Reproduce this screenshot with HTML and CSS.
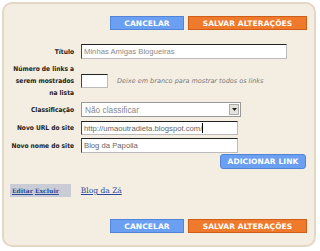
FILE: index.html
```html
<!DOCTYPE html>
<html>
<head>
<meta charset="utf-8">
<link rel="stylesheet" href="styles.css">
</head>
<body>
<div class="panel">
  <div class="actions top">
    <span class="btn blue">CANCELAR</span>
    <span class="btn orange">SALVAR ALTERAÇÕES</span>
  </div>
  <div class="form">
    <div class="lbl r-title">Título</div>
    <div class="field r-title"><span class="input wide">Minhas Amigas Blogueiras</span></div>

    <div class="lbl r-num">Número de links a<br>serem mostrados<br>na lista</div>
    <div class="field r-num"><span class="input small"></span><span class="hint">Deixe em branco para mostrar todos os links</span></div>

    <div class="lbl r-cls">Classificação</div>
    <div class="field r-cls"><span class="select">Não classificar<span class="arrow"><svg width="5" height="3" viewBox="0 0 5 3"><path d="M0 0h5L2.5 3z" fill="#222"/></svg></span></span></div>

    <div class="lbl r-url">Novo URL do site</div>
    <div class="field r-url"><span class="input mid dark">http://umaoutradieta.blogspot.com/<span class="caret"></span></span></div>

    <div class="lbl r-name">Novo nome do site</div>
    <div class="field r-name"><span class="input mid dark">Blog da Papoila</span></div>
  </div>
  <div class="addrow"><span class="btn blue add">ADICIONAR LINK</span></div>
  <div class="links">
    <span class="ops"><a>Editar</a> <a>Excluir</a></span>
    <a class="site">Blog da Zá</a>
  </div>
  <div class="actions bottom">
    <span class="btn blue">CANCELAR</span>
    <span class="btn orange">SALVAR ALTERAÇÕES</span>
  </div>
</div>
</body>
</html>
```
FILE: styles.css
```css
html, body { margin: 0; padding: 0; background: #fff; }
body { padding: 2px; width: 320px; height: 251px; box-sizing: border-box; }
.panel {
  width: 314px; height: 245px; box-sizing: border-box;
  background: #f4ede2; border: 2px solid #e3d8c6; border-radius: 10px;
  display: flex; flex-direction: column;
  font-family: "DejaVu Sans", Verdana, sans-serif;
}
.actions { display: flex; justify-content: flex-end; gap: 4px; padding-right: 7px; }
.actions.top { margin-top: 12px; }
.actions.bottom { margin-top: 22px; }
.btn {
  display: flex; align-items: center; justify-content: center;
  height: 14px; box-sizing: border-box;
  font-weight: bold; font-size: 7.5px; color: #fff; letter-spacing: 0.1px;
}
.blue { background: #6a9ff2; border: 1px solid #5284d8; width: 74px; }
.orange { background: #f07a2c; border: 1px solid #cf5f18; width: 119px; }
.form {
  display: grid; grid-template-columns: 70px 1fr; column-gap: 7px;
  margin-top: 14px;
}
.lbl {
  font-weight: bold; font-size: 6.6px; font-stretch: condensed; color: #222; text-align: right;
  display: flex; align-items: center; justify-content: flex-end; line-height: 12px;
}
.field { display: flex; align-items: center; }
.r-title { height: 15px; }
.r-num { height: 36px; margin-top: 4px; }
.r-cls { height: 15px; margin-top: 3px; }
.r-url { height: 14px; margin-top: 4px; }
.r-name { height: 15px; margin-top: 3px; }
.input {
  display: flex; align-items: center; box-sizing: border-box;
  background: #fff; border: 1px solid #bbb; border-top-color: #222; border-left-color: #444;
  font-family: "Liberation Sans", Arial, sans-serif; font-size: 7.7px; color: #8a8a8a;
  padding-left: 2px; height: 100%;
}
.input.wide { width: 206px; }
.input.small { width: 27px; height: 14px; }
.input.mid { width: 157px; }
.input.dark { color: #666; }
.caret { display: inline-block; width: 1px; height: 10px; background: #000; }
.hint {
  font-style: italic; font-size: 6.5px; color: #777; margin-left: 9px;
}
.select {
  position: relative; display: flex; align-items: center; box-sizing: border-box;
  width: 160px; height: 15px; background: #fff; border: 1px solid #999;
  font-family: "Liberation Sans", Arial, sans-serif; font-size: 8.3px; color: #888; padding-left: 3px;
}
.arrow {
  position: absolute; right: 1px; top: 1px; width: 10px; height: 11px;
  background: #e4e2dc; border: 1px solid #aaa; box-sizing: border-box;
  display: flex; align-items: center; justify-content: center;
}
.addrow { display: flex; justify-content: flex-end; padding-right: 8px; margin-top: 1px; }
.add { width: 86px; height: 15px; border-radius: 3px; }
.links { display: flex; align-items: center; margin-top: 15px; padding-left: 6px; gap: 10px; }
.ops {
  background: #c9ccd4; font-family: "DejaVu Serif", serif; font-size: 6px; font-weight: bold;
  padding: 3px 12px 3px 2px; color: #2b4a9a;
}
.ops a { text-decoration: underline; }
.site {
  font-family: "DejaVu Serif", serif; font-size: 7.5px; color: #2b4a9a; text-decoration: underline;
}
```
